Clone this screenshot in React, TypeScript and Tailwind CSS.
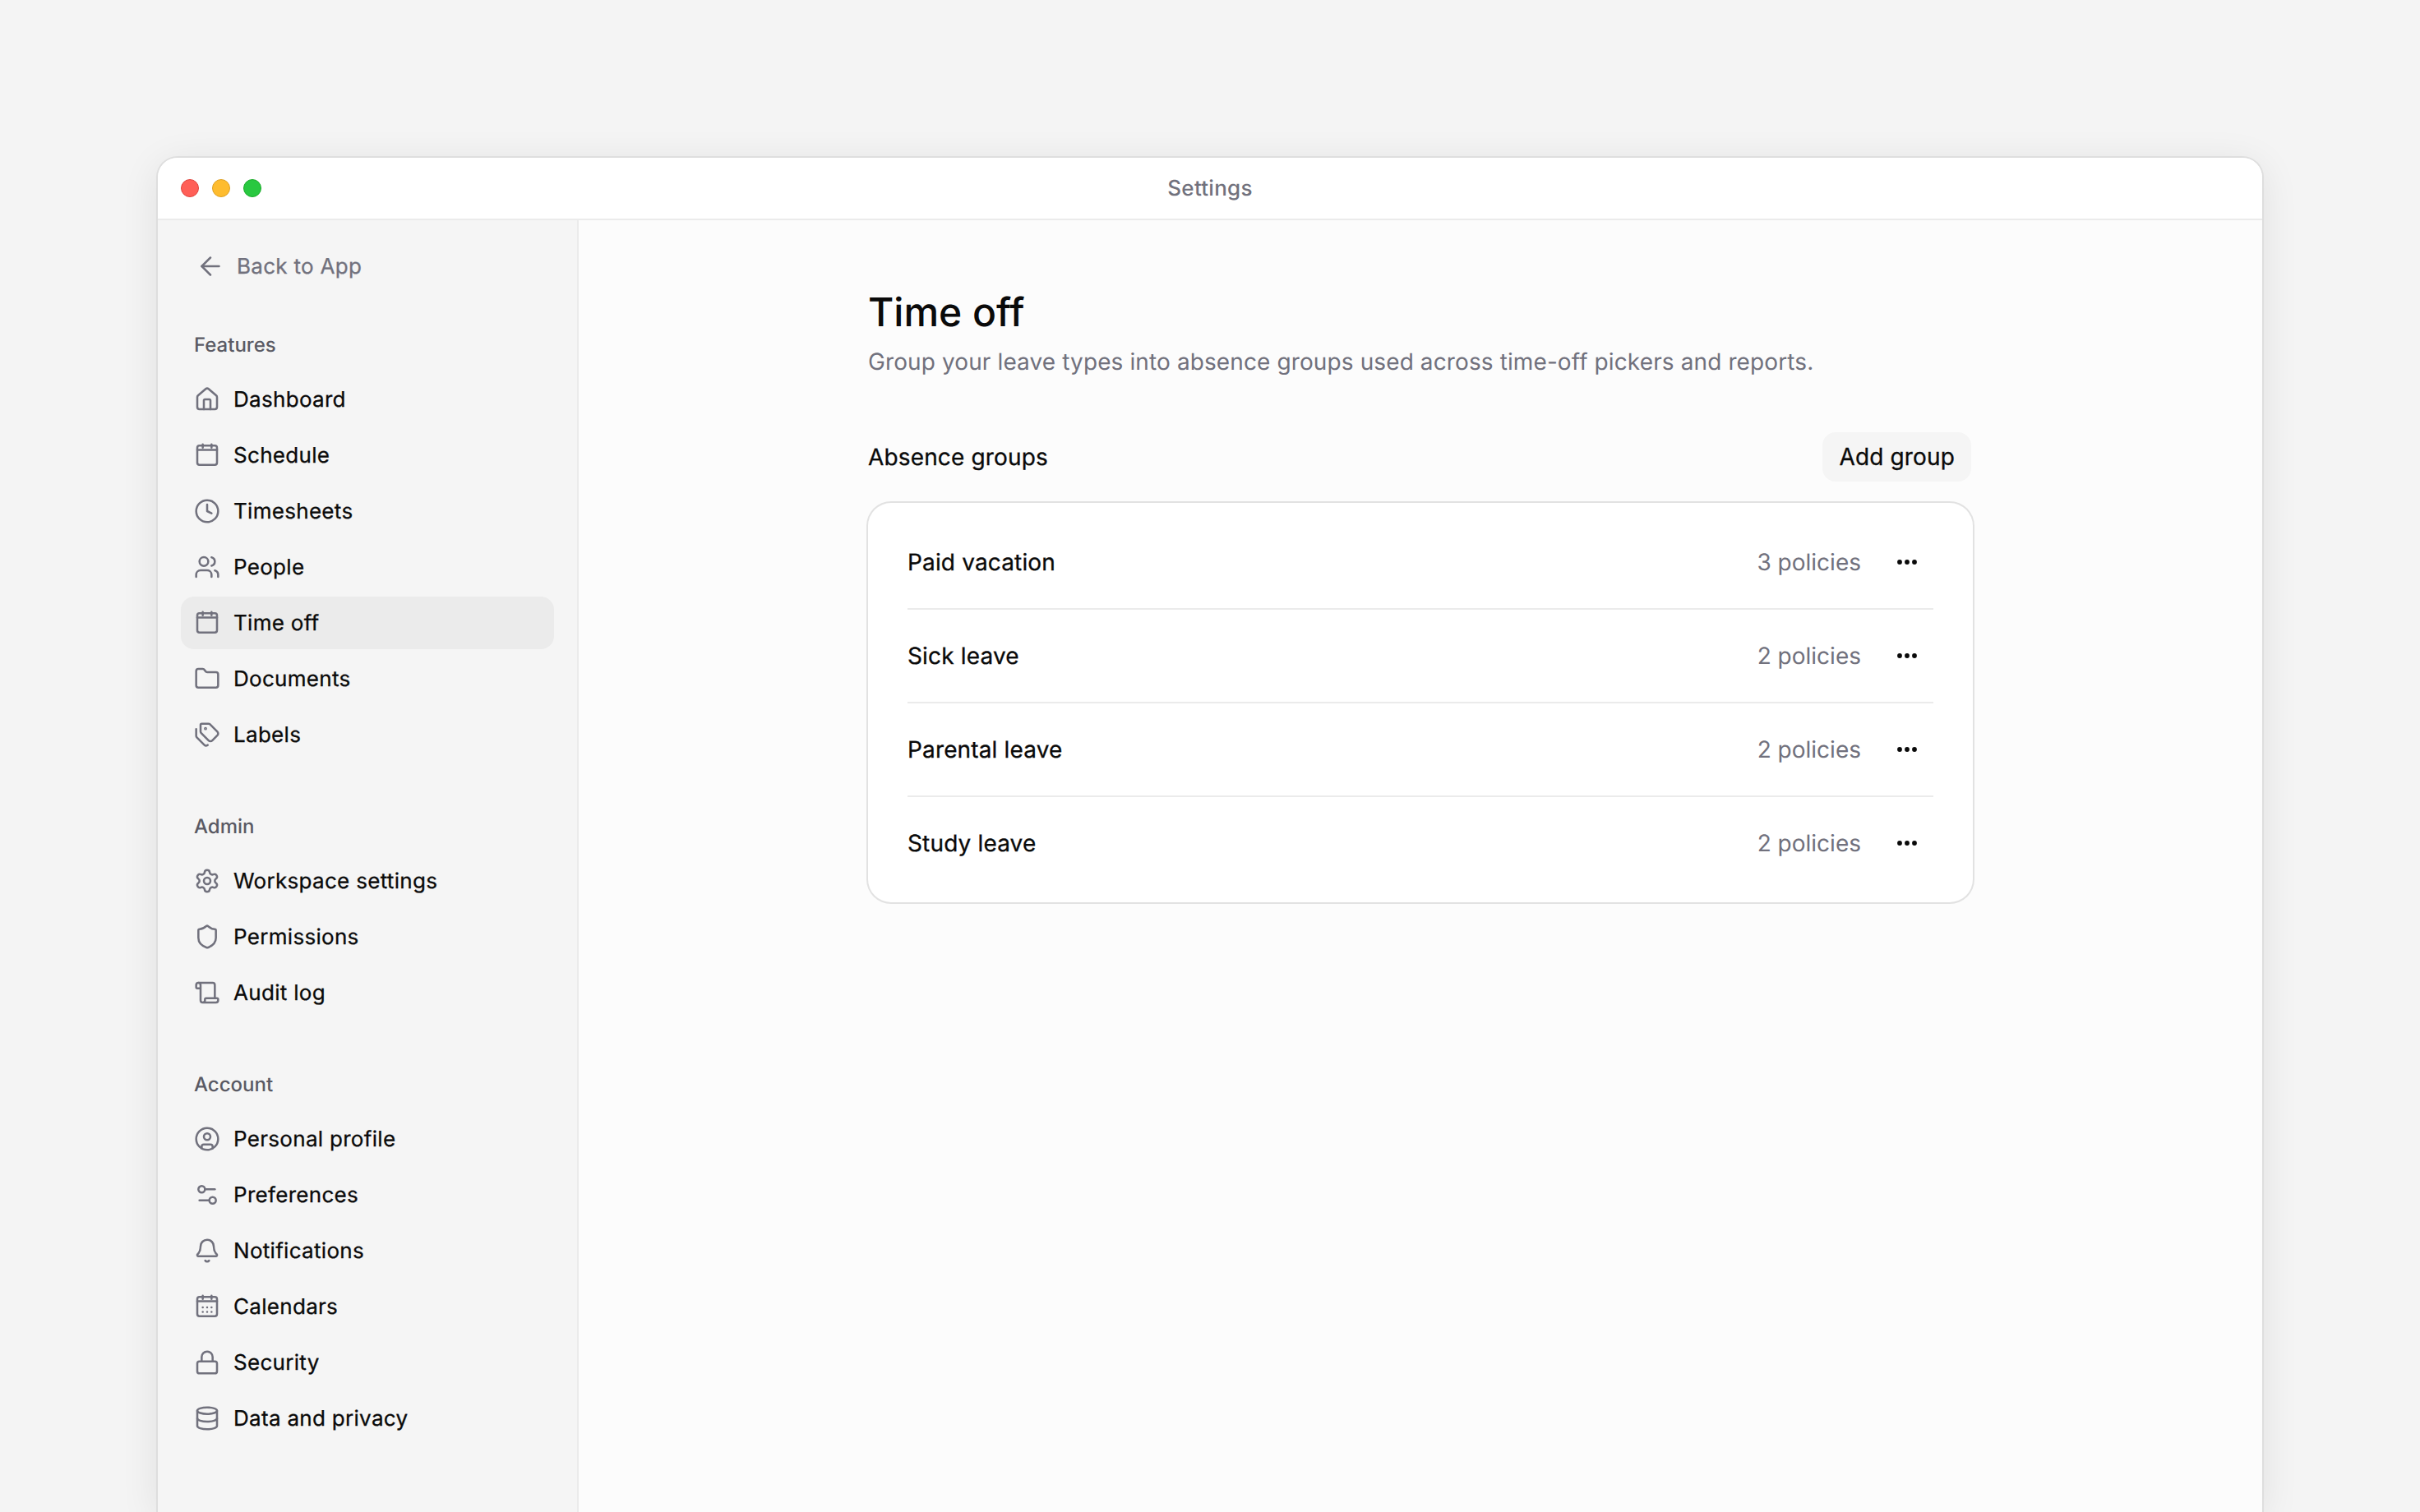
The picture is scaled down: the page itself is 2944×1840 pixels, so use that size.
// Settings window: sidebar navigation and the absence groups list
import {
  ArrowLeft,
  Bell,
  CircleUser,
  Clock,
  Database,
  Folder,
  House,
  Lock,
  Scroll,
  Settings,
  Settings2,
  Shield,
  Tags,
  Users,
} from 'lucide-react';

type IconProps = { size?: number; strokeWidth?: number; className?: string };
type IconType = (props: IconProps) => React.ReactNode;

interface NavEntry {
  label: string;
  icon: IconType;
  active?: boolean;
}

// lucide's calendar sits lower and has a deeper header than the one in the design
function CalendarPlain({ size = 32, strokeWidth = 1.9, className }: IconProps) {
  return (
    <svg
      width={size}
      height={size}
      viewBox="0 0 24 24"
      fill="none"
      stroke="currentColor"
      strokeWidth={strokeWidth}
      strokeLinecap="round"
      strokeLinejoin="round"
      className={className}
    >
      <rect x="3" y="3.2" width="18" height="17.6" rx="2" />
      <path d="M8 2v3M16 2v3M3 7.2h18" />
    </svg>
  );
}

function CalendarDotted({ size = 32, strokeWidth = 1.9, className }: IconProps) {
  return (
    <svg
      width={size}
      height={size}
      viewBox="0 0 24 24"
      fill="none"
      stroke="currentColor"
      strokeWidth={strokeWidth}
      strokeLinecap="round"
      strokeLinejoin="round"
      className={className}
    >
      <rect x="3" y="3.2" width="18" height="17.6" rx="2" />
      <path d="M8 2v3M16 2v3M3 7.2h18" />
      <path d="M8 12.8h.01M12 12.8h.01M16 12.8h.01M8 16.8h.01M12 16.8h.01M16 16.8h.01" />
    </svg>
  );
}

const sections: { title: string; items: NavEntry[] }[] = [
  {
    title: 'Features',
    items: [
      { label: 'Dashboard', icon: House },
      { label: 'Schedule', icon: CalendarPlain },
      { label: 'Timesheets', icon: Clock },
      { label: 'People', icon: Users },
      { label: 'Time off', icon: CalendarPlain, active: true },
      { label: 'Documents', icon: Folder },
      { label: 'Labels', icon: Tags },
    ],
  },
  {
    title: 'Admin',
    items: [
      { label: 'Workspace settings', icon: Settings },
      { label: 'Permissions', icon: Shield },
      { label: 'Audit log', icon: Scroll },
    ],
  },
  {
    title: 'Account',
    items: [
      { label: 'Personal profile', icon: CircleUser },
      { label: 'Preferences', icon: Settings2 },
      { label: 'Notifications', icon: Bell },
      { label: 'Calendars', icon: CalendarDotted },
      { label: 'Security', icon: Lock },
      { label: 'Data and privacy', icon: Database },
    ],
  },
];

const groups = [
  { name: 'Paid vacation', policies: '3 policies' },
  { name: 'Sick leave', policies: '2 policies' },
  { name: 'Parental leave', policies: '2 policies' },
  { name: 'Study leave', policies: '2 policies' },
];

function NavItem({ label, icon: Icon, active }: NavEntry) {
  return (
    <div
      className={`h-16 flex items-center gap-4 pl-4 rounded-[16px] text-[26px] tracking-[0.3px] text-[#0a0a0a] [-webkit-text-stroke:0.3px] ${
        active ? 'bg-[#ebebeb]' : ''
      }`}
    >
      <Icon size={32} strokeWidth={1.9} className="text-[#71717d] flex-shrink-0" />
      <span>{label}</span>
    </div>
  );
}

function MoreDots() {
  return (
    <svg width="24" height="6" viewBox="0 0 24 6" className="text-[#0a0a0a]">
      <circle cx="3" cy="3" r="2.9" fill="currentColor" />
      <circle cx="12" cy="3" r="2.9" fill="currentColor" />
      <circle cx="21" cy="3" r="2.9" fill="currentColor" />
    </svg>
  );
}

export default function App() {
  return (
    <div className="h-[1840px] overflow-hidden bg-[#f4f4f4] pt-[192px] px-[192px] [font-family:Inter,sans-serif] [text-rendering:geometricPrecision]">
      <div className="h-[1648px] flex flex-col rounded-t-[24px] bg-[#fcfcfc] shadow-[0_0_0_2px_#dedede,0_8px_48px_rgba(0,0,0,0.09)]">
        {/* Title bar */}
        <div className="h-[76px] flex-shrink-0 grid grid-cols-3 items-center px-7 rounded-t-[24px] bg-white border-b-2 border-[#ebebeb]">
          <div className="flex items-center gap-4">
            <span className="w-[22px] h-[22px] rounded-full bg-[#ff5f57] border border-[#e0443e]" />
            <span className="w-[22px] h-[22px] rounded-full bg-[#febc2e] border border-[#dea123]" />
            <span className="w-[22px] h-[22px] rounded-full bg-[#28c840] border border-[#1aab29]" />
          </div>
          <div className="text-center text-[26px] font-medium tracking-[0.25px] text-[#71717d]">Settings</div>
        </div>

        <div className="flex-1 flex min-h-0">
          {/* Sidebar */}
          <aside className="w-[512px] flex-shrink-0 bg-[#f5f5f5] border-r-2 border-[#ebebeb] px-7 pt-6">
            <div className="h-16 flex items-center gap-[14px] pl-[18px] text-[26px] tracking-[0.3px] text-[#71717d] [-webkit-text-stroke:0.3px]">
              <ArrowLeft size={36} strokeWidth={1.65} className="flex-shrink-0" />
              <span>Back to App</span>
            </div>
            <div className="flex flex-col gap-16 mt-12">
              {sections.map((section) => (
                <section key={section.title}>
                  <div className="h-8 mb-[18px] pl-4 flex items-center text-[24px] font-medium text-[#5a5a64]">
                    {section.title}
                  </div>
                  <div className="flex flex-col gap-1">
                    {section.items.map((item) => (
                      <NavItem key={item.label} {...item} />
                    ))}
                  </div>
                </section>
              ))}
            </div>
          </aside>

          {/* Main content */}
          <main className="flex-1 flex justify-center pt-[84px]">
            <div className="w-[1344px]">
              <h1 className="text-[48px] leading-[56px] font-medium text-[#0a0a0a]">Time off</h1>
              <p className="mt-3 text-[28px] leading-10 tracking-[0.11px] text-[#71717d]">
                Group your leave types into absence groups used across time-off pickers and reports.
              </p>

              <div className="mt-[66px] h-[60px] flex items-center justify-between">
                <h2 className="text-[28px] tracking-[0.15px] text-[#0a0a0a] [-webkit-text-stroke:0.3px]">Absence groups</h2>
                <button className="h-[60px] px-5 mr-[2px] rounded-[16px] bg-[#f5f5f5] text-[28px] tracking-[0.15px] text-[#0a0a0a] [-webkit-text-stroke:0.3px]">
                  Add group
                </button>
              </div>

              <div className="mt-[26px] rounded-[28px] bg-white shadow-[0_0_0_2px_#e2e2e2] px-12 pt-4 pb-[14px]">
                {groups.map((group, index) => (
                  <div
                    key={group.name}
                    className={`h-[114px] flex items-center justify-between border-b-2 ${
                      index < groups.length - 1 ? 'border-[#ebebeb]' : 'border-transparent'
                    }`}
                  >
                    <span className="text-[28px] tracking-[0.15px] text-[#0a0a0a] [-webkit-text-stroke:0.3px]">{group.name}</span>
                    <div className="flex items-center gap-6">
                      <span className="text-[28px] text-[#71717d]">{group.policies}</span>
                      <div className="w-16 h-16 flex items-center justify-center">
                        <MoreDots />
                      </div>
                    </div>
                  </div>
                ))}
              </div>
            </div>
          </main>
        </div>
      </div>
    </div>
  );
}
